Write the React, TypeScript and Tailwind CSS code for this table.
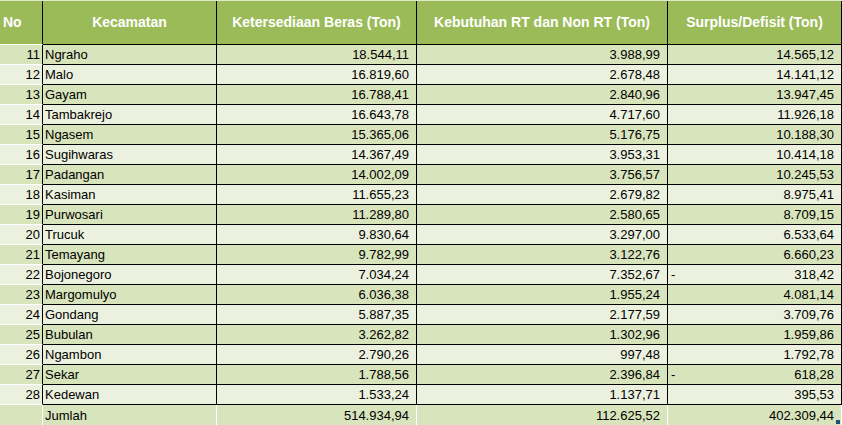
const rows = [
  ['11', 'Ngraho', '18.544,11', '3.988,99', '14.565,12'],
  ['12', 'Malo', '16.819,60', '2.678,48', '14.141,12'],
  ['13', 'Gayam', '16.788,41', '2.840,96', '13.947,45'],
  ['14', 'Tambakrejo', '16.643,78', '4.717,60', '11.926,18'],
  ['15', 'Ngasem', '15.365,06', '5.176,75', '10.188,30'],
  ['16', 'Sugihwaras', '14.367,49', '3.953,31', '10.414,18'],
  ['17', 'Padangan', '14.002,09', '3.756,57', '10.245,53'],
  ['18', 'Kasiman', '11.655,23', '2.679,82', '8.975,41'],
  ['19', 'Purwosari', '11.289,80', '2.580,65', '8.709,15'],
  ['20', 'Trucuk', '9.830,64', '3.297,00', '6.533,64'],
  ['21', 'Temayang', '9.782,99', '3.122,76', '6.660,23'],
  ['22', 'Bojonegoro', '7.034,24', '7.352,67', '-318,42'],
  ['23', 'Margomulyo', '6.036,38', '1.955,24', '4.081,14'],
  ['24', 'Gondang', '5.887,35', '2.177,59', '3.709,76'],
  ['25', 'Bubulan', '3.262,82', '1.302,96', '1.959,86'],
  ['26', 'Ngambon', '2.790,26', '997,48', '1.792,78'],
  ['27', 'Sekar', '1.788,56', '2.396,84', '-618,28'],
  ['28', 'Kedewan', '1.533,24', '1.137,71', '395,53'],
];

function Surplus({ value }: { value: string }) {
  const negative = value.startsWith('-');
  return (
    <div className="flex items-center justify-between pl-[3px] pr-[7px] border-r border-black">
      <span>{negative ? '-' : ''}</span>
      <span>{negative ? value.slice(1) : value}</span>
    </div>
  );
}

export default function App() {
  return (
    <div className="w-[842px] h-[425px] bg-white overflow-hidden relative text-[13px] text-black font-['Liberation_Sans',Arial,sans-serif]">
      {/* Header */}
      <div className="grid grid-cols-[43px_174px_200px_251px_174px] h-[45px] bg-[#9bbb59] border-t border-[#dfe9cc] text-white font-bold text-[14px]">
        <div className="flex items-center pl-[3px] border-r border-black border-b border-b-white">No</div>
        <div className="flex items-center justify-center border-r border-b border-black">Kecamatan</div>
        <div className="flex items-center justify-center border-r border-b border-black">Ketersediaan Beras (Ton)</div>
        <div className="flex items-center justify-center border-r border-b border-black">Kebutuhan RT dan Non RT (Ton)</div>
        <div className="flex items-center justify-center border-r border-b border-black">Surplus/Defisit (Ton)</div>
      </div>

      {/* Body */}
      {rows.map((r, i) => (
        <div
          key={r[0]}
          className={`grid grid-cols-[43px_174px_200px_251px_174px] h-[20px] leading-none ${i % 2 === 0 ? 'bg-[#d8e4bc]' : 'bg-[#ebf1de]'}`}
        >
          <div className="flex items-center justify-end pr-[2px] border-r border-black border-b border-b-white">{r[0]}</div>
          <div className="flex items-center pl-[2px] border-r border-b border-black">{r[1]}</div>
          <div className="flex items-center justify-end pr-[7px] border-r border-b border-black">{r[2]}</div>
          <div className="flex items-center justify-end pr-[7px] border-r border-b border-black">{r[3]}</div>
          <div className="border-b border-black grid">
            <Surplus value={r[4]} />
          </div>
        </div>
      ))}

      {/* Total */}
      <div className="grid grid-cols-[43px_174px_200px_251px_174px] h-[20px] leading-none bg-[#d8e4bc]">
        <div className="border-r border-white"></div>
        <div className="flex items-center pl-[2px] border-r border-white">Jumlah</div>
        <div className="flex items-center justify-end pr-[7px] border-r border-white">514.934,94</div>
        <div className="flex items-center justify-end pr-[7px] border-r border-white">112.625,52</div>
        <div className="flex items-center justify-end pr-[7px] border-r border-white">402.309,44</div>
      </div>

      {/* Excel fill handle */}
      <div className="absolute right-[2px] bottom-[1px] w-[4px] h-[4px] bg-[#1f4e79]"></div>
    </div>
  );
}
